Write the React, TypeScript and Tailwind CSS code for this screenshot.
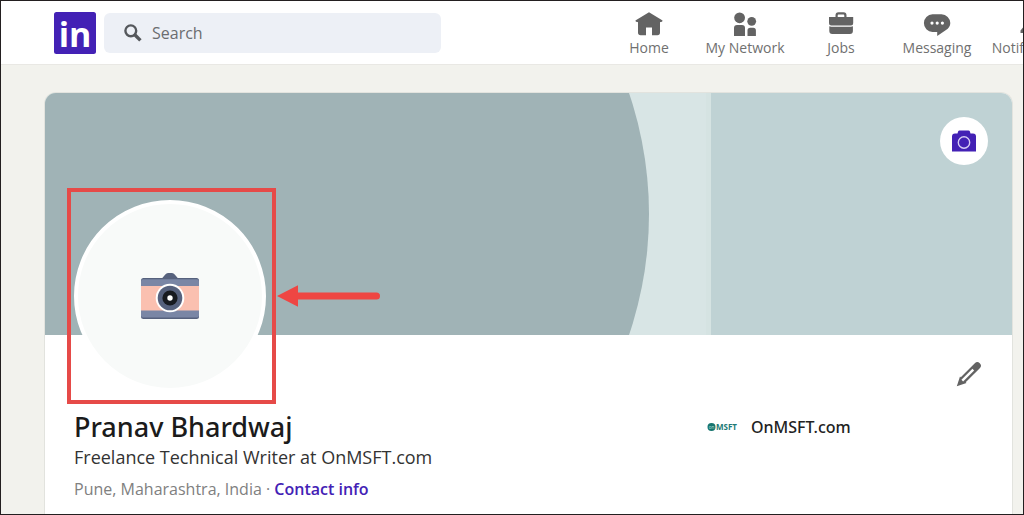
import React, { useState } from 'react';

type IconProps = { className?: string };

const LinkedInLogo = ({ className }: IconProps) => (
  <svg viewBox="0 0 42 42" className={className} aria-hidden="true">
    <rect width="42" height="42" rx="2.500" fill="#4321b5" />
    <text x="21" y="35" fontSize="34" fontWeight="700" textAnchor="middle" fill="#fff">in</text>
  </svg>
);

const HomeIcon = ({ className }: IconProps) => (
  <svg viewBox="0 0 28 28" className={className} fill="currentColor" aria-hidden="true">
    <path d="M14 2.3 27.2 10.2c.5.3.4 1-.1 1.3l-.9.6c-.3.2-.7.2-1 0l-.2-.1v10.6a2.6 2.6 0 0 1-2.6 2.6H17v-7.6h-6v7.6H5.600a2.600 2.600 0 0 1-2.600-2.600V12l-.2.1c-.3.2-.7.2-1 0l-.9-.6c-.5-.3-.6-1-.1-1.300Z" />
  </svg>
);

const NetworkIcon = ({ className }: IconProps) => (
  <svg viewBox="0 0 28 28" className={className} fill="currentColor" aria-hidden="true">
    <circle cx="8.600" cy="7.800" r="5.400" />
    <circle cx="20.700" cy="11.300" r="4.400" />
    <path d="M3 26V18a3 3 0 0 1 3-3h5a3 3 0 0 1 3 3v8Z" />
    <path d="M16.500 26v-5.500a2.700 2.700 0 0 1 2.700-2.700h3a2.700 2.700 0 0 1 2.700 2.700V26Z" />
  </svg>
);

const JobsIcon = ({ className }: IconProps) => (
  <svg viewBox="0 0 28 28" className={className} fill="currentColor" aria-hidden="true">
    <path d="M8.500 7V5.300A3 3 0 0 1 11.500 2.300h5a3 3 0 0 1 3 3V7h6.700v6.200a2.200 2.200 0 0 1-2.200 2.200H4.200A2.200 2.200 0 0 1 2 13.200V7Zm2.200 0h6.600V5.600c0-.7-.4-1.100-1.100-1.100h-4.400c-.7 0-1.100.4-1.100 1.100Z" />
    <path d="M2.300 16.200c.6.300 1.200.500 1.900.500H24c.7 0 1.300-.2 1.900-.5v4.800a3 3 0 0 1-3 3H5.300a3 3 0 0 1-3-3Z" />
  </svg>
);

const MessagingIcon = ({ className }: IconProps) => (
  <svg viewBox="0 0 28 28" className={className} fill="currentColor" aria-hidden="true">
    <path
      fillRule="evenodd"
      d="M9.500 4.300h9a8.800 8.800 0 0 1 8.800 8.800c0 3-1.700 5.400-4.300 7L14.200 26v-4.100H9.500A8.600 8.600 0 0 1 .9 13.100a8.700 8.700 0 0 1 8.600-8.800ZM9 11.500a1.600 1.600 0 1 0 0 3.200 1.600 1.600 0 0 0 0-3.200Zm5.200 0a1.600 1.600 0 1 0 0 3.200 1.600 1.600 0 0 0 0-3.200Zm5.200 0a1.600 1.600 0 1 0 0 3.200 1.600 1.600 0 0 0 0-3.200Z"
    />
  </svg>
);

const BellIcon = ({ className }: IconProps) => (
  <svg viewBox="0 0 28 28" className={className} fill="currentColor" aria-hidden="true">
    <path d="M14 2a8 8 0 0 1 7.900 6.600L23.500 17l3 3.500V23h-25v-2.500l3-3.500 1.600-8.400A8 8 0 0 1 14 2Zm-3 22h6a3 3 0 0 1-6 0Z" />
  </svg>
);

const SearchIcon = ({ className }: IconProps) => (
  <svg viewBox="0 0 18 18" className={className} fill="none" stroke="currentColor" aria-hidden="true">
    <circle cx="6.800" cy="6.800" r="5.400" strokeWidth="2.400" />
    <path d="m10.800 10.800 5.600 5.600" strokeWidth="3.400" />
  </svg>
);

const CoverCameraIcon = ({ className }: IconProps) => (
  <svg viewBox="0 0 24 22" className={className} aria-hidden="true">
    <path
      fill="#4321b5"
      d="M7.500.5h9c.7 0 1.200.4 1.400 1l.6 2H21a3 3 0 0 1 3 3v15H0v-15a3 3 0 0 1 3-3h2.500l.6-2c.2-.6.700-1 1.400-1Z"
    />
    <circle cx="12" cy="12.500" r="5.700" fill="none" stroke="#d5cbf3" strokeWidth="1.400" />
  </svg>
);

const PencilIcon = ({ className }: IconProps) => (
  <svg viewBox="0 0 26 26" className={className} aria-hidden="true">
    <path d="M21.300 4.700 7.500 18.500" stroke="#636363" strokeWidth="7" strokeLinecap="round" />
    <path d="M.800 25.200 4 15.500l6.500 6.500Z" fill="#636363" />
    <path d="M17.300 8.700 6.300 19.700" stroke="#fff" strokeWidth="2.400" />
  </svg>
);

const AvatarCamera = ({ className }: IconProps) => (
  <svg viewBox="0 0 58 46" className={className} aria-hidden="true">
    <path fill="#56617d" d="M20 6.500 24.300 1.500Q25.300 0 27 0h4q1.700 0 2.700 1.500L38 6.500Z" />
    <rect x="0" y="5" width="58" height="41" rx="2.500" fill="#56617d" />
    <rect x="0" y="6.200" width="58" height="38.200" rx="2" fill="#7a86a5" />
    <rect x="0" y="13" width="58" height="24.500" fill="#fac0b0" />
    <circle cx="29" cy="25" r="14.300" fill="#fff" />
    <circle cx="29" cy="25" r="12.300" fill="#56617d" />
    <circle cx="29" cy="25" r="7.600" fill="#171a20" />
    <circle cx="29" cy="25" r="2.700" fill="#fff" />
  </svg>
);

const CompanyLogo = ({ className }: IconProps) => (
  <svg viewBox="0 0 32 10" className={className} aria-hidden="true">
    <circle cx="4.500" cy="5" r="4" fill="#17756f" />
    <text x="4.500" y="6.500" fontSize="4.500" textAnchor="middle" fill="#bfe0dc">on</text>
    <text x="9" y="7.900" fontSize="8" fontWeight="700" fill="#207a76">MSFT</text>
  </svg>
);

const navItems = [
  { label: 'Home', Icon: HomeIcon },
  { label: 'My Network', Icon: NetworkIcon },
  { label: 'Jobs', Icon: JobsIcon },
  { label: 'Messaging', Icon: MessagingIcon },
  { label: 'Notifications', Icon: BellIcon },
];

function Header() {
  const [searchTerm, setSearchTerm] = useState('');

  return (
    <header className="flex items-center h-16 pl-[53px] bg-white border-b border-[#e9e8e4] overflow-hidden">
      <a href="#feed" aria-label="LinkedIn" className="shrink-0">
        <LinkedInLogo className="w-[42px] h-[42px]" />
      </a>
      <label className="flex items-center gap-2 shrink-0 w-[337px] h-10 ml-2 px-5 rounded-md bg-[#edf0f6]">
        <SearchIcon className="w-[18px] h-[18px] shrink-0 text-[#55585c]" />
        <input
          type="text"
          aria-label="Search"
          placeholder="Search"
          value={searchTerm}
          onChange={(e) => setSearchTerm(e.target.value)}
          className="w-full pl-0.5 bg-transparent text-base outline-none placeholder:text-[#6b6d70]"
        />
      </label>
      <nav className="flex shrink-0 pt-0.5 ml-40">
        {navItems.map(({ label, Icon }) => (
          <a key={label} href="#nav" className="flex flex-col items-center w-24 text-[#707070]">
            <Icon className="w-7 h-7 text-[#636363]" />
            <span className="text-sm leading-5">{label}</span>
          </a>
        ))}
      </nav>
    </header>
  );
}

function Banner() {
  return (
    <div className="relative">
      <svg
        viewBox="0 0 967 242"
        preserveAspectRatio="xMinYMid slice"
        className="block w-full h-[242px]"
        aria-hidden="true"
      >
        <rect width="967" height="242" fill="#bfd2d4" />
        <rect width="666" height="242" fill="#d8e5e5" />
        <rect x="661" width="5" height="242" fill="#d5e3e2" />
        <circle cx="228" cy="121" r="376" fill="#a0b3b6" />
      </svg>
      <button
        aria-label="Edit cover photo"
        className="absolute top-6 right-6 flex items-center justify-center w-12 h-12 rounded-full bg-white"
      >
        <CoverCameraIcon className="w-6 h-[22px]" />
      </button>
    </div>
  );
}

function Avatar() {
  return (
    <div className="relative w-48 -mt-[135px]">
      <button
        aria-label="Add profile photo"
        className="flex items-center justify-center w-48 h-48 rounded-full border-4 border-white bg-[#f8faf9]"
      >
        <AvatarCamera className="w-[58px] h-[46px]" />
      </button>
      {/* highlight box and arrow drawn over the card */}
      <div className="absolute -left-[7px] -right-2.5 -top-3 -bottom-3 border-4 border-[#e64a48] pointer-events-none" />
      <svg viewBox="0 0 104 22" className="absolute top-[85px] left-[203px] w-[104px] h-[22px]" aria-hidden="true">
        <path d="M18 11h81.500" stroke="#ee4643" strokeWidth="7" strokeLinecap="round" />
        <path d="M0 11 21 .3v21.400Z" fill="#ee4643" />
      </svg>
    </div>
  );
}

export default function App() {
  return (
    <div className="flex flex-col min-h-screen border border-[#231f20] bg-[#f2f2ed] font-['Open_Sans',sans-serif] overflow-hidden">
      <Header />
      <main className="flex flex-col flex-1 pt-[27px] pl-[43px] pr-2.5">
        <section className="flex-1 rounded-t-xl border border-b-0 border-[#e2e3de] bg-white overflow-hidden">
          <Banner />
          <div className="pl-[29px] pr-7">
            <div className="flex items-start justify-between">
              <Avatar />
              <button aria-label="Edit profile" className="mt-[26px] mr-0.5">
                <PencilIcon className="w-[26px] h-[26px]" />
              </button>
            </div>
            <div className="flex items-start pt-[17px]">
              <div className="flex-1">
                <h1 className="font-['Noto_Sans',sans-serif] text-[27px] leading-9 font-medium text-[#1b1b1b]">
                  Pranav Bhardwaj
                </h1>
                <p className="text-lg leading-6 text-[#333]">Freelance Technical Writer at OnMSFT.com</p>
                <p className="mt-2 text-base leading-6 text-[#808080]">
                  Pune, Maharashtra, India ·{' '}
                  <a href="#contact" className="font-semibold text-[#4321b5]">Contact info</a>
                </p>
              </div>
              <a href="#company" className="flex items-center gap-3 w-[277px] pt-1.5">
                <CompanyLogo className="w-8 h-2.5" />
                <span className="font-['Noto_Sans',sans-serif] text-base leading-6 font-medium text-[#222]">
                  OnMSFT.com
                </span>
              </a>
            </div>
          </div>
        </section>
      </main>
    </div>
  );
}
